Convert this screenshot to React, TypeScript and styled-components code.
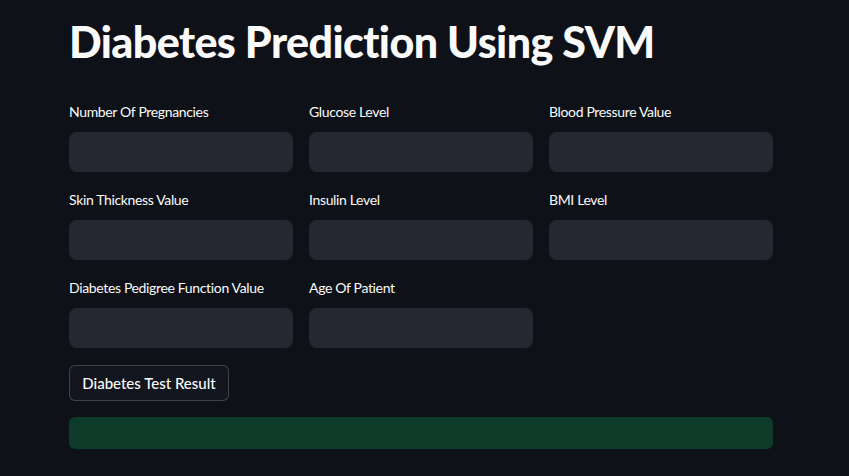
import React from "react";
import styled, { createGlobalStyle } from "styled-components";

const Global = createGlobalStyle`
  html, body { margin: 0; padding: 0; background: #0e1117; }
  body { font-family: "Lato", "Open Sans", sans-serif; color: #fafafa; }
`;

const Page = styled.div`
  width: 849px;
  height: 476px;
  box-sizing: border-box;
  padding: 14px 0 0 69px;
  background: #0e1117;
  overflow: hidden;
`;

const Main = styled.div`
  width: 704px;
  display: flex;
  flex-direction: column;
`;

const Title = styled.h1`
  margin: 0;
  font-size: 43px;
  line-height: 56px;
  font-weight: 900;
  color: #fafafa;
  letter-spacing: -0.6px;
`;

const Grid = styled.div`
  margin-top: 34px;
  display: grid;
  grid-template-columns: repeat(3, 224px);
  column-gap: 16px;
  row-gap: 20px;
`;

const Field = styled.div`
  display: flex;
  flex-direction: column;
`;

const Label = styled.label`
  font-size: 14px;
  line-height: 16px;
  height: 20px;
  margin-bottom: 8px;
  color: #fafafa;
  letter-spacing: -0.35px;
`;

const Input = styled.div`
  height: 40px;
  border-radius: 8px;
  background: #262730;
`;

const Button = styled.button`
  margin-top: 17px;
  align-self: flex-start;
  box-sizing: border-box;
  height: 36px;
  width: 160px;
  border: 1px solid rgba(250, 250, 250, 0.2);
  border-radius: 6px;
  background: #13161f;
  color: #fafafa;
  font-family: "Lato", "Open Sans", sans-serif;
  font-size: 15px;
  font-weight: 500;
  white-space: nowrap;
  padding: 0;
`;

const Alert = styled.div`
  margin-top: 16px;
  height: 32px;
  border-radius: 6px;
  background: #0e3a29;
`;

const fields = [
  "Number Of Pregnancies",
  "Glucose Level",
  "Blood Pressure Value",
  "Skin Thickness Value",
  "Insulin Level",
  "BMI Level",
  "Diabetes Pedigree Function Value",
  "Age Of Patient",
];

export default function App() {
  return (
    <Page>
      <Global />
      <Main>
        <Title>Diabetes Prediction Using SVM</Title>
        <Grid>
          {fields.map((f) => (
            <Field key={f}>
              <Label>{f}</Label>
              <Input />
            </Field>
          ))}
        </Grid>
        <Button>Diabetes Test Result</Button>
        <Alert />
      </Main>
    </Page>
  );
}
